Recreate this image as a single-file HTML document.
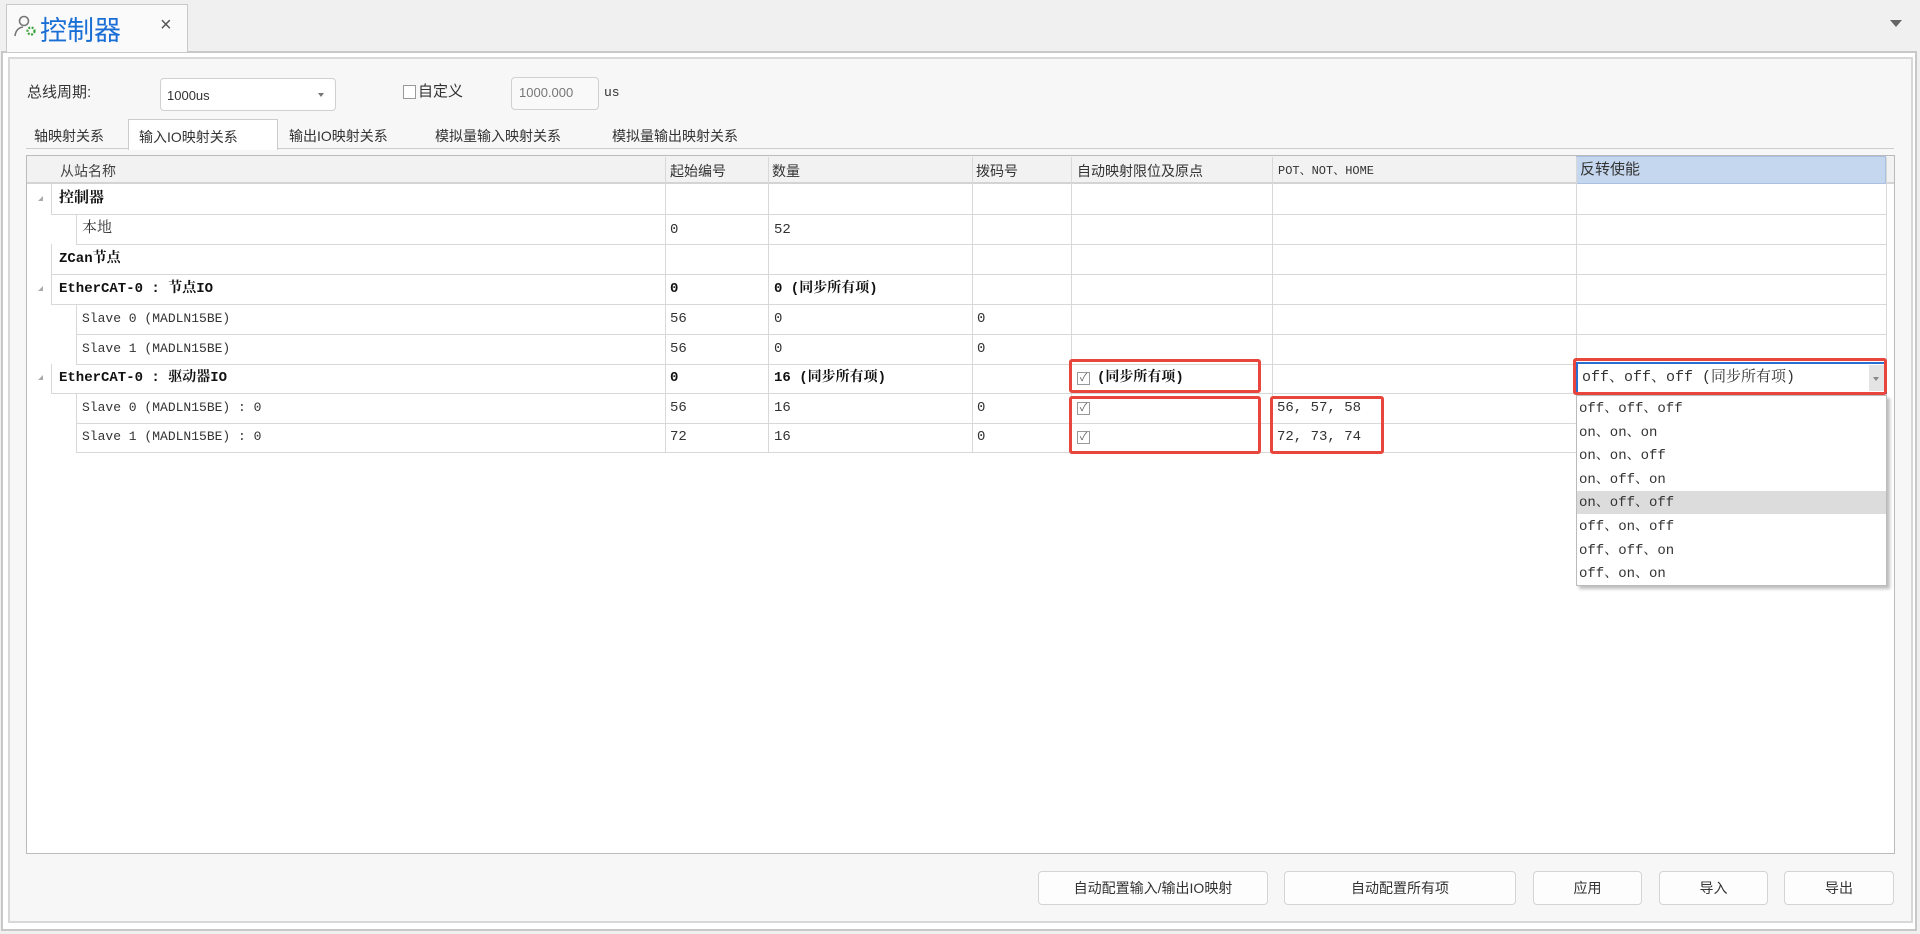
<!DOCTYPE html>
<html><head><meta charset="utf-8"><style>
*{margin:0;padding:0;box-sizing:border-box}
body{width:1920px;height:934px;background:#f0f0f0;position:relative;overflow:hidden;font-family:"Liberation Sans","Noto Sans CJK SC",sans-serif;color:#333}
.a{position:absolute}
.m{font-family:"Liberation Mono","Noto Serif CJK SC",monospace;font-size:14px;line-height:18px;color:#333;white-space:nowrap}
.b{font-weight:bold;color:#111}
.s{font-size:14px;line-height:18px;white-space:nowrap}
.hl{position:absolute;height:1px;background:#d8d8d8}
.vl{position:absolute;width:1px;background:#d8d8d8}
.btn{position:absolute;top:871px;height:34px;background:#fdfdfd;border:1px solid #d4d4d4;border-radius:4px;font-size:14px;text-align:center;line-height:32px;color:#333}
.red{position:absolute;border:3px solid #e8453c;border-radius:3px}
.cb{position:absolute;width:13px;height:13px;border:1px solid #999;background:#fff;font-size:11px;line-height:11px;text-align:center;color:#666}
</style></head><body>
<div class="a" style="left:6px;top:4px;width:182px;height:48px;background:#fafafa;border:1px solid #c8c8c8;border-bottom:none;z-index:2"></div>
<svg class="a" style="left:12px;top:14px;z-index:3" width="26" height="24" viewBox="0 0 26 24"><circle cx="12" cy="7" r="4.5" fill="none" stroke="#777" stroke-width="1.6"/><path d="M3 22 Q4 14 11 13" fill="none" stroke="#777" stroke-width="1.6"/><circle cx="19" cy="17" r="3.5" fill="none" stroke="#3aa33a" stroke-width="2.2" stroke-dasharray="2 1.4"/></svg>
<div class="a" style="left:40px;top:9px;font-size:27px;color:#1a6fd6;z-index:3">控制器</div>
<div class="a" style="left:160px;top:14px;font-size:20px;color:#555;z-index:3">×</div>
<div class="a" style="left:1890px;top:20px;width:0;height:0;border-left:6px solid transparent;border-right:6px solid transparent;border-top:7px solid #666"></div>
<div class="a" style="left:1px;top:51px;width:1916px;height:880px;border:2px solid #c8c8c8;background:#fff"></div>
<div class="a" style="left:8px;top:57px;width:1905px;height:866px;border:2px solid #d8d8d8;background:#f7f7f7"></div>
<div class="a s" style="left:27px;top:84px;font-size:15px">总线周期:</div>
<div class="a" style="left:160px;top:78px;width:176px;height:33px;background:#fff;border:1px solid #d0d0d0;border-radius:4px"></div>
<div class="a s" style="left:167px;top:87px;font-size:13px">1000us</div>
<div class="a" style="left:318px;top:93px;border-left:3px solid transparent;border-right:3px solid transparent;border-top:4px solid #777"></div>
<div class="a" style="left:403px;top:85px;width:13px;height:14px;border:1px solid #999;background:#fff"></div>
<div class="a s" style="left:418px;top:83px;font-size:15px">自定义</div>
<div class="a" style="left:511px;top:77px;width:88px;height:33px;background:#f9f9f9;border:1px solid #d0d0d0;border-radius:4px"></div>
<div class="a s" style="left:519px;top:84px;font-size:13px;color:#777">1000.000</div>
<div class="a m" style="left:604px;top:84px;font-size:13px">us</div>
<div class="a" style="left:26px;top:148px;width:1868px;height:1px;background:#ccc"></div>
<div class="a s" style="left:34px;top:127px">轴映射关系</div>
<div class="a" style="left:128px;top:119px;width:150px;height:31px;background:#fff;border:1px solid #ccc;border-bottom:none"></div>
<div class="a s" style="left:139px;top:128px">输入IO映射关系</div>
<div class="a s" style="left:289px;top:127px">输出IO映射关系</div>
<div class="a s" style="left:435px;top:127px">模拟量输入映射关系</div>
<div class="a s" style="left:612px;top:127px">模拟量输出映射关系</div>
<div class="a" style="left:26px;top:155px;width:1869px;height:699px;background:#fff;border:1px solid #bbb"></div>
<div class="a" style="left:27px;top:156px;width:1867px;height:28px;background:#f2f2f2;border-bottom:2px solid #d4d4d4"></div>
<div class="a" style="left:1576px;top:156px;width:310px;height:28px;background:#c5d7ef;border:1px solid #a9c0e0"></div>
<div class="a s" style="left:60px;top:162px;color:#444">从站名称</div>
<div class="a s" style="left:670px;top:162px">起始编号</div>
<div class="a s" style="left:772px;top:162px">数量</div>
<div class="a s" style="left:976px;top:162px">拨码号</div>
<div class="a s" style="left:1077px;top:162px">自动映射限位及原点</div>
<div class="a m" style="left:1278px;top:162px;font-size:12px">POT、NOT、HOME</div>
<div class="a s" style="left:1580px;top:161px;font-size:15px">反转使能</div>
<div class="vl" style="left:665px;top:157px;height:296px"></div>
<div class="vl" style="left:768px;top:157px;height:296px"></div>
<div class="vl" style="left:972px;top:157px;height:296px"></div>
<div class="vl" style="left:1071px;top:157px;height:296px"></div>
<div class="vl" style="left:1272px;top:157px;height:296px"></div>
<div class="vl" style="left:1576px;top:157px;height:296px"></div>
<div class="vl" style="left:1886px;top:157px;height:296px"></div>
<div class="hl" style="left:51px;top:214px;width:1836px"></div>
<div class="hl" style="left:76px;top:244px;width:1811px"></div>
<div class="hl" style="left:51px;top:274px;width:1836px"></div>
<div class="hl" style="left:51px;top:304px;width:1836px"></div>
<div class="hl" style="left:76px;top:334px;width:1811px"></div>
<div class="hl" style="left:76px;top:364px;width:1811px"></div>
<div class="hl" style="left:51px;top:393px;width:1836px"></div>
<div class="hl" style="left:76px;top:423px;width:1811px"></div>
<div class="hl" style="left:76px;top:452px;width:1811px"></div>
<div class="vl" style="left:51px;top:184px;height:30px"></div>
<div class="vl" style="left:51px;top:244px;height:60px"></div>
<div class="vl" style="left:51px;top:364px;height:30px"></div>
<div class="vl" style="left:76px;top:214px;height:30px"></div>
<div class="vl" style="left:76px;top:304px;height:60px"></div>
<div class="vl" style="left:76px;top:393px;height:60px"></div>
<div class="a" style="left:38px;top:196px;border-left:5px solid transparent;border-bottom:5px solid #aaa"></div>
<div class="a" style="left:38px;top:286px;border-left:5px solid transparent;border-bottom:5px solid #aaa"></div>
<div class="a" style="left:38px;top:375px;border-left:5px solid transparent;border-bottom:5px solid #aaa"></div>
<div class="a m b" style="left:59px;top:190px;font-size:15px">控制器</div>
<div class="a m" style="left:82px;top:220px;font-size:15px">本地</div>
<div class="a m" style="left:670px;top:221px">0</div><div class="a m" style="left:774px;top:221px">52</div>
<div class="a m b" style="left:59px;top:250px">ZCan节点</div>
<div class="a m b" style="left:59px;top:280px">EtherCAT-0 : 节点IO</div>
<div class="a m b" style="left:670px;top:280px">0</div><div class="a m b" style="left:774px;top:280px">0 (同步所有项)</div>
<div class="a m" style="left:82px;top:310px;font-size:13px">Slave 0 (MADLN15BE)</div>
<div class="a m" style="left:670px;top:310px">56</div><div class="a m" style="left:774px;top:310px">0</div><div class="a m" style="left:977px;top:310px">0</div>
<div class="a m" style="left:82px;top:340px;font-size:13px">Slave 1 (MADLN15BE)</div>
<div class="a m" style="left:670px;top:340px">56</div><div class="a m" style="left:774px;top:340px">0</div><div class="a m" style="left:977px;top:340px">0</div>
<div class="a m b" style="left:59px;top:369px">EtherCAT-0 : 驱动器IO</div>
<div class="a m b" style="left:670px;top:369px">0</div><div class="a m b" style="left:774px;top:369px">16 (同步所有项)</div>
<div class="cb" style="left:1077px;top:372px">✓</div><div class="a m b" style="left:1097px;top:369px">(同步所有项)</div>
<div class="a m" style="left:82px;top:399px;font-size:13px">Slave 0 (MADLN15BE) : 0</div>
<div class="a m" style="left:670px;top:399px">56</div><div class="a m" style="left:774px;top:399px">16</div><div class="a m" style="left:977px;top:399px">0</div>
<div class="cb" style="left:1077px;top:402px">✓</div><div class="a m" style="left:1277px;top:399px">56, 57, 58</div>
<div class="a m" style="left:82px;top:428px;font-size:13px">Slave 1 (MADLN15BE) : 0</div>
<div class="a m" style="left:670px;top:428px">72</div><div class="a m" style="left:774px;top:428px">16</div><div class="a m" style="left:977px;top:428px">0</div>
<div class="cb" style="left:1077px;top:431px">✓</div><div class="a m" style="left:1277px;top:428px">72, 73, 74</div>
<div class="a" style="left:1576px;top:362px;width:311px;height:32px;background:#fff;border:2px solid #2a6ed0"></div>
<div class="a" style="left:1869px;top:365px;width:15px;height:26px;background:#e4e4e4"></div>
<div class="a" style="left:1873px;top:377px;border-left:3px solid transparent;border-right:3px solid transparent;border-top:4px solid #888"></div>
<div class="a m" style="left:1582px;top:369px;font-size:15px">off、off、off (同步所有项)</div>
<div class="a" style="left:1576px;top:395px;width:311px;height:191px;background:#fff;border:1px solid #bbb;box-shadow:3px 3px 3px rgba(0,0,0,.25)"></div>
<div class="a" style="left:1577px;top:491px;width:309px;height:23px;background:#dcdcdc"></div>
<div class="a m" style="left:1579px;top:398px;line-height:23.6px">off、off、off<br>on、on、on<br>on、on、off<br>on、off、on<br>on、off、off<br>off、on、off<br>off、off、on<br>off、on、on</div>
<div class="red" style="left:1069px;top:359px;width:192px;height:34px"></div>
<div class="red" style="left:1069px;top:396px;width:192px;height:58px"></div>
<div class="red" style="left:1270px;top:396px;width:114px;height:58px"></div>
<div class="red" style="left:1573px;top:358px;width:314px;height:37px"></div>
<div class="btn" style="left:1038px;width:230px">自动配置输入/输出IO映射</div>
<div class="btn" style="left:1284px;width:232px">自动配置所有项</div>
<div class="btn" style="left:1533px;width:109px">应用</div>
<div class="btn" style="left:1659px;width:109px">导入</div>
<div class="btn" style="left:1784px;width:110px">导出</div>
</body></html>
